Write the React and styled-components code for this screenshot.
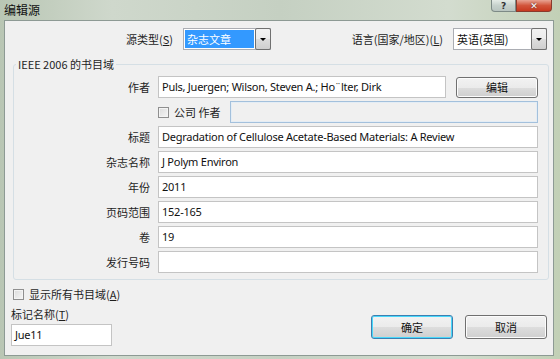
import React from 'react'
import styled, { createGlobalStyle } from 'styled-components'

const Global = createGlobalStyle`
  html, body { margin: 0; padding: 0; width: 560px; height: 359px; overflow: hidden; }
  body { font-family: "Noto Sans", "Noto Sans CJK SC", sans-serif; font-size: 11px; color: #1e1e1e; }
`

const cjk = `"Noto Sans CJK SC", "Noto Sans", sans-serif`

const Frame = styled.div`
  width: 560px;
  height: 359px;
  display: flex;
  flex-direction: column;
  background: linear-gradient(90deg, #b9c6b4 0%, #cfd8cc 20%, #c5d0c2 50%, #d3dccf 80%, #c2d0b6 100%);
`

const TitleBar = styled.div`
  height: 20px;
  display: flex;
  align-items: flex-start;
  justify-content: space-between;
  padding-left: 4px;
  padding-right: 8px;
`

const Title = styled.div`
  font-family: ${cjk};
  font-size: 12px;
  line-height: 20px;
  color: #111;
`

const Caps = styled.div`
  display: flex;
  height: 12px;
`

const Cap = styled.div`
  width: ${p => p.$w}px;
  height: 12px;
  display: flex;
  align-items: center;
  justify-content: center;
  font-family: "DejaVu Sans", sans-serif;
  font-size: 9px;
  font-weight: bold;
  color: ${p => p.$close ? '#fff' : '#333'};
  border: 1px solid ${p => p.$close ? '#8a3a2c' : '#7d8a86'};
  border-top: none;
  border-radius: ${p => p.$close ? '0 0 4px 0' : '0 0 0 4px'};
  background: ${p => p.$close
    ? 'linear-gradient(#e8a493, #d2553b 50%, #c7381e)'
    : 'linear-gradient(#e4ebe6, #c6d1cc 50%, #b9c5c0)'};
  box-sizing: border-box;
  text-shadow: ${p => p.$close ? '0 0 2px #333' : 'none'};
`

const Client = styled.div`
  flex: 1;
  margin: 0 6px 3px 4px;
  background: #f0f0f0;
  border: 1px solid #8d9a94;
  display: flex;
  flex-direction: column;
  padding: 7px 6px 0 6px;
  box-sizing: border-box;
`

const TopRow = styled.div`
  display: flex;
  align-items: center;
  height: 22px;
`

const TopLabel = styled.div`
  font-family: ${cjk};
  width: ${p => p.$w}px;
  text-align: right;
  padding-right: 10px;
  box-sizing: border-box;
`

const Combo = styled.div`
  width: ${p => p.$w}px;
  height: 22px;
  box-sizing: border-box;
  border: 1px solid #abadb3;
  background: #fff;
  display: flex;
  align-items: stretch;
  padding: 1px;
`

const ComboText = styled.div`
  flex: 1;
  font-family: ${cjk};
  line-height: 18px;
  padding-left: 2px;
  background: ${p => p.$sel ? '#3399ff' : 'transparent'};
  color: ${p => p.$sel ? '#fff' : '#111'};
  margin-right: 1px;
`

const DropBtn = styled.div`
  width: 14px;
  border: 1px solid #707070;
  border-radius: 2px;
  background: linear-gradient(#f2f2f2, #ebebeb 50%, #dddddd 51%, #cfcfcf);
  display: flex;
  align-items: center;
  justify-content: center;
  margin: -2px -2px -2px 0;
  &::after {
    content: '';
    border-left: 3px solid transparent;
    border-right: 3px solid transparent;
    border-top: 3px solid #000;
  }
`

const Group = styled.fieldset`
  margin: 6px 0 0 2px;
  width: 536px;
  box-sizing: border-box;
  border: 1px solid #d5dfe5;
  border-radius: 3px;
  padding: 4px 10px 6px 0;
  display: flex;
  flex-direction: column;
  gap: 3px;
`

const Legend = styled.legend`
  font-family: ${cjk};
  padding: 0 2px;
  margin-left: 2px;
  color: #1e1e1e;
`

const Row = styled.div`
  display: flex;
  align-items: center;
  height: 22px;
`

const Label = styled.div`
  font-family: ${cjk};
  width: 144px;
  text-align: right;
  padding-right: 8px;
  box-sizing: border-box;
  flex-shrink: 0;
`

const Field = styled.div`
  width: ${p => p.$w ? `${p.$w}px` : 'auto'};
  flex: ${p => p.$w ? 'none' : 1};
  height: 22px;
  box-sizing: border-box;
  background: ${p => p.$disabled ? '#f0f0f0' : '#fff'};
  border: 1px solid ${p => p.$disabled ? '#a3c0dc' : '#c4c4c4'};
  box-shadow: ${p => p.$disabled ? 'inset 0 0 0 1px #e4edf5' : 'none'};
  padding-left: 3px;
  line-height: 20px;
  font-size: 11px;
  letter-spacing: -0.25px;
  color: #111;
  white-space: nowrap;
  overflow: hidden;
`

const Button = styled.div`
  width: ${p => p.$w}px;
  height: ${p => p.$h || 24}px;
  box-sizing: border-box;
  border: 1px solid ${p => p.$def ? '#3c7fb1' : '#707070'};
  border-radius: 3px;
  background: linear-gradient(#f2f2f2, #ebebeb 50%, #dddddd 51%, #cfcfcf);
  box-shadow: ${p => p.$def ? 'inset 0 0 0 1px #48d8fb' : 'inset 0 0 0 1px #fcfcfc'};
  font-family: ${cjk};
  display: flex;
  align-items: center;
  justify-content: center;
  color: #111;
`

const Check = styled.span`
  width: 11px;
  height: 11px;
  box-sizing: border-box;
  border: 1px solid #8f8f8f;
  background: linear-gradient(135deg, #dcdcdc, #f6f6f6);
  box-shadow: inset 0 0 0 1px #f4f4f4;
  display: inline-block;
  flex-shrink: 0;
`

const CheckLine = styled.div`
  display: flex;
  align-items: center;
  gap: 5px;
  font-family: ${cjk};
  width: ${p => p.$w ? `${p.$w}px` : 'auto'};
  flex-shrink: 0;
`

const Bottom = styled.div`
  flex: 1;
  display: flex;
  justify-content: space-between;
  align-items: flex-start;
  padding: 6px 0 0 0;
`

const LeftCol = styled.div`
  display: flex;
  flex-direction: column;
`

const TagLabel = styled.div`
  font-family: ${cjk};
  margin-top: 4px;
  line-height: 17px;
  margin-bottom: 1px;
`

const Buttons = styled.div`
  display: flex;
  gap: 12px;
  margin-top: 29px;
`

const Key = styled.span`
  text-decoration: underline;
`

const rows = [
  ['标题', 'Degradation of Cellulose Acetate-Based Materials: A Review'],
  ['杂志名称', 'J Polym Environ'],
  ['年份', '2011'],
  ['页码范围', '152-165'],
  ['卷', '19'],
  ['发行号码', ''],
]

export default function App() {
  return (
    <>
      <Global />
      <Frame>
        <TitleBar>
          <Title>编辑源</Title>
          <Caps>
            <Cap $w={25}>?</Cap>
            <Cap $w={36} $close>✕</Cap>
          </Caps>
        </TitleBar>
        <Client>
          <TopRow>
            <TopLabel $w={172}>源类型(<Key>S</Key>)</TopLabel>
            <Combo $w={88}>
              <ComboText $sel>杂志文章</ComboText>
              <DropBtn />
            </Combo>
            <TopLabel $w={182}>语言(国家/地区)(<Key>L</Key>)</TopLabel>
            <Combo $w={94}>
              <ComboText>英语(英国)</ComboText>
              <DropBtn />
            </Combo>
          </TopRow>
          <Group>
            <Legend>IEEE 2006 的书目域</Legend>
            <Row>
              <Label>作者</Label>
              <Field $w={288}>Puls, Juergen; Wilson, Steven A.; Ho¨lter, Dirk</Field>
              <Button $w={82} $h={21} style={{ marginLeft: 10 }}>编辑</Button>
            </Row>
            <Row>
              <Label />
              <CheckLine $w={72}>
                <Check />
                <span>公司 作者</span>
              </CheckLine>
              <Field $disabled />
            </Row>
            {rows.map(([l, v]) => (
              <Row key={l}>
                <Label>{l}</Label>
                <Field>{v}</Field>
              </Row>
            ))}
          </Group>
          <Bottom>
            <LeftCol>
              <CheckLine style={{ marginLeft: 2 }}>
                <Check />
                <span>显示所有书目域(<Key>A</Key>)</span>
              </CheckLine>
              <TagLabel>标记名称(<Key>T</Key>)</TagLabel>
              <Field $w={101}>Jue11</Field>
            </LeftCol>
            <Buttons>
              <Button $w={82} $def>确定</Button>
              <Button $w={82}>取消</Button>
            </Buttons>
          </Bottom>
        </Client>
      </Frame>
    </>
  )
}
